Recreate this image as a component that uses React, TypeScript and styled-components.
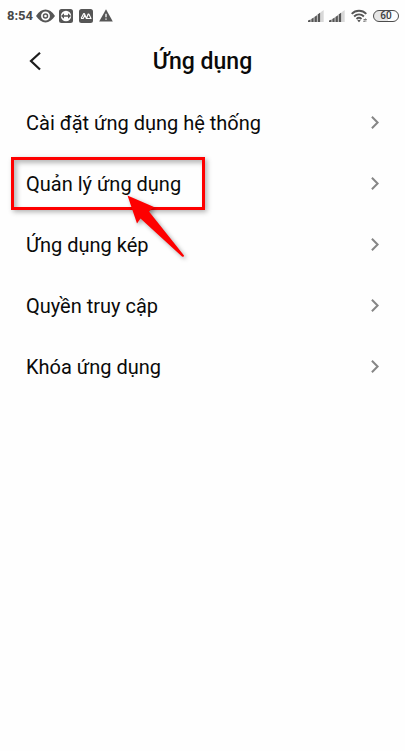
import React from "react";
import styled, { createGlobalStyle, css } from "styled-components";

const GlobalStyle = createGlobalStyle`
  * { box-sizing: border-box; }
  body {
    margin: 0;
    background: #fefefe;
    color: #0a0a0a;
    font-family: Roboto, "Noto Sans", sans-serif;
  }
`;

const Screen = styled.div`
  min-height: 100vh;
  display: flex;
  flex-direction: column;
`;

const StatusBar = styled.div`
  display: flex;
  align-items: center;
  justify-content: space-between;
  height: 31px;
  padding: 0 6px 0 7px;
  color: #565656;
`;

const StatusGroup = styled.div<{ $gap: number }>`
  display: flex;
  align-items: center;
  gap: ${({ $gap }) => $gap}px;

  svg { display: block; flex: none; }
`;

const Clock = styled.time`
  width: 25px;
  font-size: 13px;
  line-height: 16px;
  font-weight: 700;
  color: #484848;
`;

const Battery = styled.span`
  display: flex;
  align-items: center;
  justify-content: center;
  width: 26px;
  height: 12px;
  border: 1px solid #4c4c4c;
  border-radius: 6px;
  background: linear-gradient(90deg, #e6e6e6 60%, #fefefe 60%);
  color: #3c3c3c;
  font-size: 10px;
  line-height: 10px;
  font-weight: 500;
`;

const Header = styled.header`
  display: grid;
  grid-template-columns: 40px 1fr 40px;
  align-items: center;
  height: 61px;
  padding: 0 14px;
`;

const BackButton = styled.button`
  display: flex;
  align-items: center;
  justify-content: center;
  width: 40px;
  height: 40px;
  padding: 0;
  border: 0;
  background: none;
  color: #1c1c1c;
  cursor: pointer;
`;

const Title = styled.h1`
  margin: 0;
  text-align: center;
  font-size: 23px;
  line-height: 32px;
  font-weight: 500;
`;

const List = styled.ul`
  margin: 0;
  padding: 0;
  list-style: none;
`;

const Item = styled.li`
  position: relative;
`;

const RowButton = styled.button`
  display: flex;
  align-items: center;
  justify-content: space-between;
  width: 100%;
  min-height: 61px;
  padding: 0 25px 0 26px;
  border: 0;
  background: none;
  color: inherit;
  font: inherit;
  font-size: 20px;
  line-height: 28px;
  text-align: left;
  cursor: pointer;

  svg { color: #868686; flex: none; }
`;

const overlay = css`
  position: absolute;
  z-index: 1;
  pointer-events: none;
`;

const Highlight = styled.span`
  ${overlay}
  top: 4px;
  left: 11px;
  width: 194px;
  height: 53px;
  border: 3px solid #fe0000;
  box-shadow: 2px 2px 5px rgba(0, 0, 0, 0.3), inset 3px 3px 5px rgba(0, 0, 0, 0.28);
`;

const Pointer = styled.svg`
  ${overlay}
  top: 41px;
  left: 126px;
  overflow: visible;
  filter: drop-shadow(2px 2px 2px rgba(0, 0, 0, 0.35));
`;

const EyeIcon = () => (
  <svg width="19" height="14" viewBox="0 0 19 14" aria-hidden="true">
    <path fill="currentColor" d="M0 7C3 2.600 6 .6 9.500 .6S16 2.600 19 7C16 11.400 13 13.400 9.500 13.400S3 11.400 0 7Z" />
    <circle cx="9.500" cy="7" r="3.600" fill="none" stroke="#fefefe" strokeWidth="1.700" />
    <circle cx="9.500" cy="7" r="1.300" fill="#fefefe" />
  </svg>
);

const RemoteIcon = () => (
  <svg width="14" height="14" viewBox="0 0 14 14" aria-hidden="true">
    <rect width="14" height="14" rx="2.500" fill="currentColor" />
    <circle cx="7" cy="7" r="5.200" fill="#fefefe" />
    <path fill="currentColor" d="M2 7 5 4.300V6.200H9V4.300L12 7 9 9.700V7.800H5V9.700Z" />
  </svg>
);

const MountainsIcon = () => (
  <svg width="14" height="14" viewBox="0 0 14 14" aria-hidden="true">
    <rect width="14" height="14" rx="2.500" fill="currentColor" />
    <path d="M2 9.500H4.200L5.800 6.200M2.200 9.300 4.600 4.700H5.400L7.400 9.500 9.200 5H9.800L12 9.500H7.400" fill="none" stroke="#fefefe" strokeWidth="1.200" strokeLinejoin="round" />
  </svg>
);

const WarningIcon = () => (
  <svg width="14" height="13" viewBox="0 0 14 13" aria-hidden="true">
    <path fill="currentColor" d="M7 .3 13.800 12.500H.2Z" />
    <path d="M7 4.800V8.200M7 9.500V10.800" stroke="#fefefe" strokeWidth="1.300" />
  </svg>
);

const SignalIcon = () => (
  <svg width="16" height="12" viewBox="0 0 16 12" aria-hidden="true">
    <path fill="currentColor" d="M0 12V10.500L2.600 9.500V12ZM3.300 12V9L5.700 7.600V12ZM6.400 12V7L8.900 5.200V12ZM9.600 12V4.600L12.300 2.500V12Z" />
    <path fill="#d8d8d8" d="M13 12V2L15.700 0V12Z" />
  </svg>
);

const WifiIcon = () => (
  <svg width="17" height="14" viewBox="0 0 17 14" aria-hidden="true">
    <g fill="none" stroke="currentColor" strokeWidth="1.900">
      <path d="M.7 4.800C4.700.7 11.300.7 15.300 4.800" />
      <path d="M3.100 7.500C5.900 4.700 10.100 4.700 12.900 7.500" />
      <path d="M5.500 10C7 8.600 9 8.600 10.500 10" />
    </g>
    <path fill="currentColor" d="M6.300 11.400C7.300 10.500 8.700 10.500 9.700 11.400L8 13.300Z" />
    <path d="M12.500 10.500H15.500L14.500 9.500M15.500 12H12.500L13.500 13" fill="none" stroke="currentColor" strokeWidth=".8" />
  </svg>
);

const BackIcon = () => (
  <svg width="14" height="20" viewBox="0 0 14 20" aria-hidden="true">
    <path d="M13 .8 4 9 13 17.500" fill="none" stroke="currentColor" strokeWidth="2.200" />
  </svg>
);

const ChevronIcon = () => (
  <svg width="10" height="14" viewBox="0 0 10 14" aria-hidden="true">
    <path d="M1.900 .8 7.600 6.500 1.900 12.200" fill="none" stroke="currentColor" strokeWidth="2" />
  </svg>
);

const items = [
  { label: "Cài đặt ứng dụng hệ thống" },
  { label: "Quản lý ứng dụng", highlighted: true },
  { label: "Ứng dụng kép" },
  { label: "Quyền truy cập" },
  { label: "Khóa ứng dụng" },
];

export default function App() {
  return (
    <Screen>
      <GlobalStyle />
      <StatusBar>
        <StatusGroup $gap={6}>
          <StatusGroup $gap={4}>
            <Clock>8:54</Clock>
            <EyeIcon />
            <RemoteIcon />
          </StatusGroup>
          <MountainsIcon />
          <WarningIcon />
        </StatusGroup>
        <StatusGroup $gap={6}>
          <StatusGroup $gap={5}>
            <SignalIcon />
            <SignalIcon />
          </StatusGroup>
          <StatusGroup $gap={5}>
            <WifiIcon />
            <Battery>60</Battery>
          </StatusGroup>
        </StatusGroup>
      </StatusBar>
      <Header>
        <BackButton type="button" aria-label="Quay lại">
          <BackIcon />
        </BackButton>
        <Title>Ứng dụng</Title>
      </Header>
      <main>
        <List>
          {items.map(({ label, highlighted }) => (
            <Item key={label}>
              <RowButton type="button">
                <span>{label}</span>
                <ChevronIcon />
              </RowButton>
              {highlighted && (
                <>
                  <Highlight />
                  <Pointer width="60" height="64" viewBox="0 0 60 64" aria-hidden="true">
                    <path fill="#fe0000" d="M1.500 1.500 28 13 23 17.500 58 61.500Q58 63.500 56 62.500L14.500 24.500 11 29.500Z" />
                  </Pointer>
                </>
              )}
            </Item>
          ))}
        </List>
      </main>
    </Screen>
  );
}
